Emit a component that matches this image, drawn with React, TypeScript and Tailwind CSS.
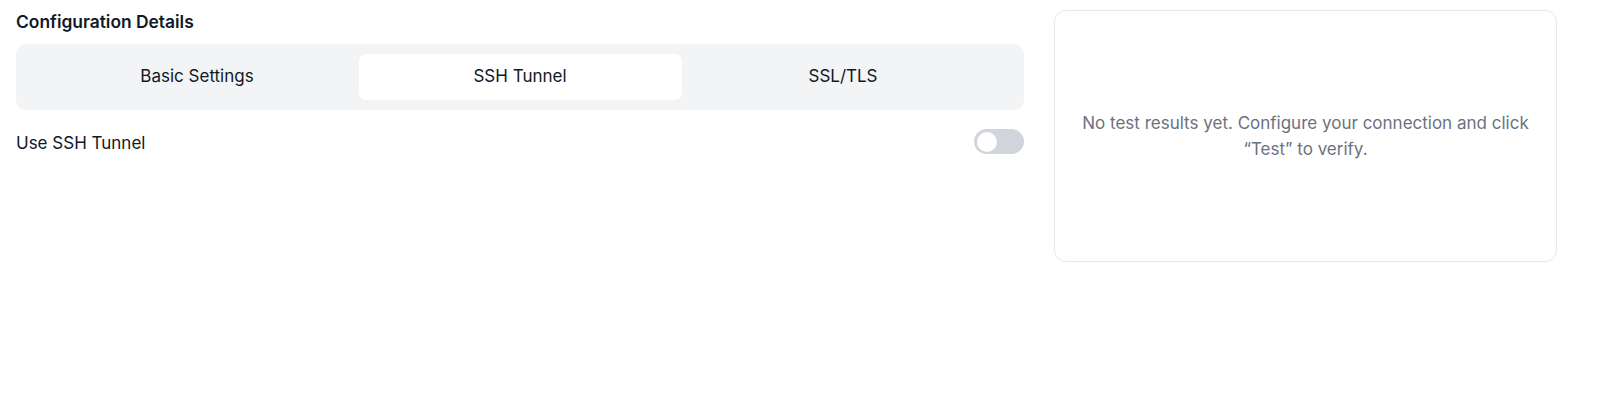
import * as React from "react"
import { useState } from "react"

const tabs = ["Basic Settings", "SSH Tunnel", "SSL/TLS"]

export default function App() {
  const [activeTab, setActiveTab] = useState("SSH Tunnel")
  const [useTunnel, setUseTunnel] = useState(false)

  return (
    <div
      className="flex w-[1597px] h-[406px] bg-white pl-[16px] pt-[10px] gap-[30px] text-[#111827]"
      style={{ fontFamily: "Inter, 'Liberation Sans', sans-serif" }}
    >
      {/* Left: configuration */}
      <div className="w-[1008px] flex flex-col">
        <h2 className="text-[17.4px] leading-[24px] font-semibold mb-[10px]">Configuration Details</h2>

        {/* Tabs */}
        <div className="grid grid-cols-3 bg-[#f3f4f6] rounded-[10px] px-[19.5px] py-[10px] h-[66px]">
          {tabs.map((tab) => (
            <button
              key={tab}
              onClick={() => setActiveTab(tab)}
              className={
                activeTab === tab
                  ? "bg-white rounded-[7px] text-[17px] text-[#111827]"
                  : "rounded-[7px] text-[17px] text-[#111827]"
              }
            >
              {tab}
            </button>
          ))}
        </div>

        {/* SSH toggle row */}
        <div className="flex items-center justify-between mt-[19px] h-[25px]">
          <span className="text-[17px] leading-[24px] mt-[3px]">Use SSH Tunnel</span>
          <button
            onClick={() => setUseTunnel(!useTunnel)}
            className={
              useTunnel
                ? "w-[50px] h-[25px] rounded-full bg-[#2563eb] flex items-center justify-end px-[3px]"
                : "w-[50px] h-[25px] rounded-full bg-[#d1d5db] flex items-center px-[3px]"
            }
          >
            <span className="w-[20px] h-[20px] rounded-full bg-white block" />
          </button>
        </div>
      </div>

      {/* Right: test results */}
      <div className="w-[503px] h-[252px] border border-[#e5e7eb] rounded-[12px] flex items-center justify-center px-[24px]">
        <p className="text-center text-[17px] leading-[26px] text-[#6b7280]">
          No test results yet. Configure your connection and click “Test” to verify.
        </p>
      </div>
    </div>
  )
}
